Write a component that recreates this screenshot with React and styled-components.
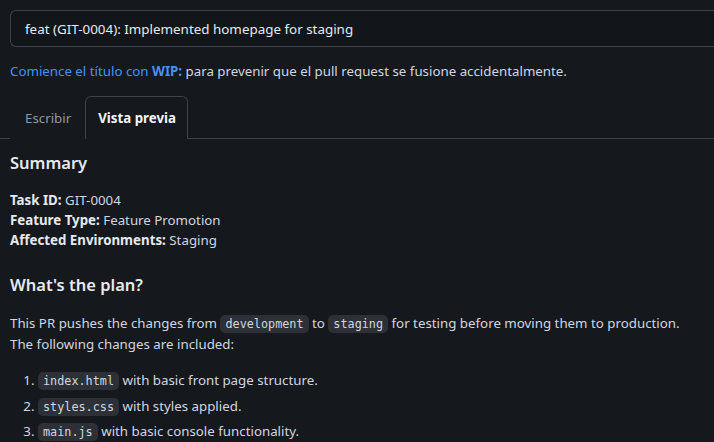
import React from "react";
import styled, { createGlobalStyle } from "styled-components";

const GlobalStyle = createGlobalStyle`
  html, body {
    margin: 0;
    background: #15181c;
  }
  body {
    font-family: "Noto Sans", "Open Sans", sans-serif;
    color: #d1d7e0;
    font-size: 13.3px;
  }
`;

const Page = styled.div`
  padding: 10px 0 0 10px;
  width: 714px;
  height: 442px;
  box-sizing: border-box;
  overflow: hidden;
`;

const TitleInput = styled.div`
  height: 37px;
  box-sizing: border-box;
  border: 1px solid #3d444d;
  border-radius: 6px 0 0 6px;
  border-right: none;
  background: #121519;
  padding: 0 14px;
  display: flex;
  align-items: center;
  font-size: 13.4px;
  color: #e6eaef;
`;

const Hint = styled.p`
  margin: 14px 0 0;
  color: #d1d7e0;
  line-height: 20px;
`;

const HintLink = styled.span`
  color: #4493f8;
  font-weight: ${(p) => (p.$bold ? 700 : 400)};
`;

const Tabs = styled.div`
  display: flex;
  margin-top: 15px;
  margin-left: -10px;
  padding-left: 10px;
  border-bottom: 1px solid #3d444d;
  height: 42px;
`;

const Tab = styled.div`
  padding: ${(p) => (p.$active ? "0 11px 0 12px" : "0 13px 0 14px")};
  display: flex;
  align-items: center;
  color: ${(p) => (p.$active ? "#f0f6fc" : "#9198a1")};
  font-weight: ${(p) => (p.$active ? 700 : 400)};
  border: 1px solid ${(p) => (p.$active ? "#3d444d" : "transparent")};
  border-bottom: none;
  border-radius: 6px 6px 0 0;
  margin-bottom: -1px;
  background: #15181c;
`;

const Body = styled.div`
  padding-top: 12px;
  padding-right: 10px;
  line-height: 20px;
`;

const H2 = styled.h2`
  margin: 0 0 15px;
  font-size: 16.5px;
  font-weight: 600;
  line-height: 24px;
  color: #e6eaef;
`;

const Fields = styled.p`
  margin: 0 0 23px;
`;

const Label = styled.strong`
  font-weight: 700;
  color: #e6eaef;
`;

const Para = styled.p`
  margin: 0 0 16px;
  padding-top: 2px;
  line-height: 19.5px;
`;

const Code = styled.code`
  font-family: "DejaVu Sans Mono", "Liberation Mono", monospace;
  font-size: 11.8px;
  background: #2d3137;
  border-radius: 5px;
  padding: 2px 5px;
  color: #d1d7e0;
`;

const List = styled.ol`
  margin: 0;
  padding-left: 28px;

  li {
    line-height: 20px;
  }

  li + li {
    margin-top: 4.5px;
  }
`;

export default function App() {
  return (
    <Page>
      <GlobalStyle />
      <TitleInput>feat (GIT-0004): Implemented homepage for staging</TitleInput>
      <Hint>
        <HintLink>Comience el título con </HintLink>
        <HintLink $bold>WIP:</HintLink> para prevenir que el pull request se
        fusione accidentalmente.
      </Hint>
      <Tabs>
        <Tab>Escribir</Tab>
        <Tab $active>Vista previa</Tab>
      </Tabs>
      <Body>
        <H2>Summary</H2>
        <Fields>
          <Label>Task ID:</Label> GIT-0004
          <br />
          <Label>Feature Type:</Label> Feature Promotion
          <br />
          <Label>Affected Environments:</Label> Staging
        </Fields>
        <H2>What's the plan?</H2>
        <Para>
          This PR pushes the changes from <Code>development</Code> to{" "}
          <Code>staging</Code> for testing before moving them to production.
          <br />
          The following changes are included:
        </Para>
        <List>
          <li>
            <Code>index.html</Code> with basic front page structure.
          </li>
          <li>
            <Code>styles.css</Code> with styles applied.
          </li>
          <li>
            <Code>main.js</Code> with basic console functionality.
          </li>
        </List>
      </Body>
    </Page>
  );
}
